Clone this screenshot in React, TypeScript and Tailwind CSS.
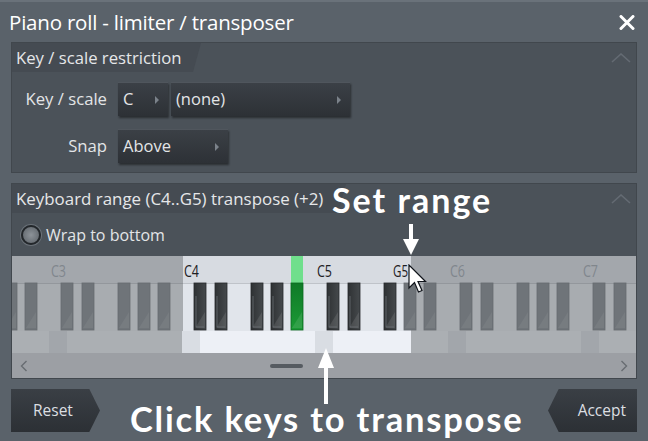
import React from 'react';

const blackOffsets = [11, 32, 68, 88, 108];
const octaves = [-95, 38, 171, 304, 437, 570];
const rangeStart = 171;
const rangeEnd = 399;
const greenKey = 279;

const labels = [
  { x: 39, t: 'C3', on: false },
  { x: 172, t: 'C4', on: true },
  { x: 305, t: 'C5', on: true },
  { x: 381, t: 'G5', on: true },
  { x: 438, t: 'C6', on: false },
  { x: 571, t: 'C7', on: false },
];

const Dropdown: React.FC<{ label: string; className: string }> = ({ label, className }) => (
  <div
    className={`h-[34px] flex items-center justify-between pl-[5px] pr-[9px] bg-linear-to-b from-[#3b4046] to-[#2d3136] border-t border-[#50565d] shadow-[1px_2px_2px_rgba(0,0,0,0.45)] text-[16.5px] text-[#e3e5e7] ${className}`}
  >
    <span>{label}</span>
    <span className="w-0 h-0 border-y-[4px] border-y-transparent border-l-[4px] border-l-[#7b828a]" />
  </div>
);

const Chevron: React.FC = () => (
  <svg width="20" height="10" viewBox="0 0 20 10" className="mr-[5px]">
    <polyline points="1,9 10,1 19,9" fill="none" stroke="#646b73" strokeWidth="1.6" />
  </svg>
);

const Keyboard: React.FC = () => {
  const keys: { x: number; on: boolean; green: boolean }[] = [];
  octaves.forEach((c) => {
    blackOffsets.forEach((o) => {
      const x = c + o;
      if (x + 12 < 0 || x > 624) return;
      keys.push({ x, on: x >= rangeStart && x + 12 <= rangeEnd, green: x === greenKey });
    });
  });
  return (
    <svg width="624" height="97" viewBox="0 0 624 97" className="block">
      <defs>
        <linearGradient id="blk" x1="0" y1="0" x2="1" y2="0">
          <stop offset="0" stopColor="#2f3234" />
          <stop offset="1" stopColor="#45494c" />
        </linearGradient>
        <linearGradient id="grn" x1="0" y1="0" x2="0" y2="1">
          <stop offset="0" stopColor="#0f7a27" />
          <stop offset="1" stopColor="#1c9a36" />
        </linearGradient>
      </defs>
      <rect x="0" y="0" width="624" height="27" fill="#a3a7ac" />
      <rect x="0" y="27" width="624" height="70" fill="#a8acb0" />
      <rect x="0" y="75" width="624" height="22" fill="#abafb3" />
      <rect x={rangeStart} y="0" width={rangeEnd - rangeStart} height="27" fill="#d7dbe1" />
      <rect x={rangeStart} y="27" width={rangeEnd - rangeStart} height="70" fill="#e1e5eb" />
      <rect x={rangeStart} y="75" width={rangeEnd - rangeStart} height="22" fill="#edf0f6" />
      {octaves.map((c) => (
        <rect
          key={c}
          x={c - 1}
          y="75"
          width="18"
          height="22"
          fill={c >= rangeStart && c < rangeEnd ? '#d9dde3' : '#a2a6ab'}
        />
      ))}
      <line x1="0" y1="27.5" x2="624" y2="27.5" stroke="#93979c" />
      <line x1={rangeStart} y1="27.5" x2={rangeEnd} y2="27.5" stroke="#bfc3c9" />
      <rect x={greenKey} y="0" width="12" height="27" fill="#70df8c" />
      {labels.map((l) => (
        <text
          key={l.t}
          x={l.x}
          y="21"
          fontSize="16"
          fontFamily="'Open Sans', sans-serif"
          textLength="15"
          lengthAdjust="spacingAndGlyphs"
          fill={l.on ? '#1d2023' : '#80868c'}
        >
          {l.t}
        </text>
      ))}
      {keys.map((k) => (
        <g key={k.x}>
          <rect
            x={k.x}
            y="27"
            width="12"
            height="47"
            fill={k.green ? 'url(#grn)' : k.on ? 'url(#blk)' : '#6f7479'}
            stroke={k.green ? '#0b6a20' : k.on ? '#26292b' : '#666b70'}
            strokeWidth="0.8"
          />
          <polygon
            points={`${k.x + 1},${72} ${k.x + 11},${56} ${k.x + 11},${72}`}
            fill="#ffffff"
            opacity={k.on || k.green ? 0.1 : 0.06}
          />
          {k.on && !k.green && (
            <polyline
              points={`${k.x + 2},${40} ${k.x + 2},${71} ${k.x + 10},${71}`}
              fill="none"
              stroke="#6b7073"
              strokeWidth="0.8"
            />
          )}
        </g>
      ))}
    </svg>
  );
};

const App: React.FC = () => {
  return (
    <div className="relative w-[648px] h-[441px] overflow-hidden bg-[#5a626a] border-t-2 border-[#6a727a] font-['Open_Sans',sans-serif] flex flex-col">
      {/* title bar */}
      <div className="h-[40px] flex items-center justify-between pl-[9px] pr-[13px]">
        <span className="text-[20.5px] text-white tracking-[-0.2px]">Piano roll - limiter / transposer</span>
        <svg width="16" height="15" viewBox="0 0 16 15">
          <path d="M2 1.5 L14 13.5 M14 1.5 L2 13.5" stroke="#ffffff" strokeWidth="3" strokeLinecap="round" />
        </svg>
      </div>

      {/* key / scale panel */}
      <div className="mx-[11px] h-[131px] bg-[#4b5259] border border-[#41474d] flex flex-col">
        <div className="h-[29px] flex items-center justify-between">
          <div className="h-full w-[189px] bg-[#454b52] [clip-path:polygon(0_0,100%_0,calc(100%-8px)_100%,0_100%)] flex items-center pl-[4px] text-[16.7px] text-[#e5e7e9]">
            Key / scale restriction
          </div>
          <Chevron />
        </div>
        <div className="flex items-center mt-[10px]">
          <span className="w-[95px] text-right text-[16.7px] text-[#e3e5e7]">Key / scale</span>
          <div className="flex gap-[3px] ml-[11px]">
            <Dropdown label="C" className="w-[50px]" />
            <Dropdown label="(none)" className="w-[179px]" />
          </div>
        </div>
        <div className="flex items-center mt-[13px]">
          <span className="w-[95px] text-right text-[16.7px] text-[#e3e5e7]">Snap</span>
          <Dropdown label="Above" className="w-[110px] ml-[11px]" />
        </div>
      </div>

      {/* keyboard panel */}
      <div className="mx-[11px] mt-[10px] h-[196px] bg-[#4b5259] border border-[#41474d] flex flex-col">
        <div className="h-[29px] flex items-center justify-between">
          <div className="h-full w-[334px] bg-[#454b52] [clip-path:polygon(0_0,100%_0,calc(100%-8px)_100%,0_100%)] flex items-center pl-[4px] text-[16.9px] text-[#e5e7e9]">
            Keyboard range (C4..G5) transpose (+2)
          </div>
          <Chevron />
        </div>
        <div className="h-[43px] flex items-center pl-[9px] gap-[5px]">
          <span className="w-[20px] h-[20px] rounded-full border-2 border-[#23272b] bg-radial from-[#8d9399] to-[#5c6268] shadow-[0_0_0_1px_#6a7178]" />
          <span className="text-[16px] text-[#e3e5e7]">Wrap to bottom</span>
        </div>
        <Keyboard />
        <div className="h-[25px] bg-[#9c9fa4] flex items-center px-[8px]">
          <svg width="8" height="12" viewBox="0 0 8 12">
            <polyline points="6.5,1 1.5,6 6.5,11" fill="none" stroke="#686d72" strokeWidth="1.4" />
          </svg>
          <span className="ml-[242px] w-[33px] h-[4px] rounded-full bg-[#565b61]" />
          <span className="flex-1" />
          <svg width="8" height="12" viewBox="0 0 8 12">
            <polyline points="1.5,1 6.5,6 1.5,11" fill="none" stroke="#686d72" strokeWidth="1.4" />
          </svg>
        </div>
      </div>

      {/* buttons */}
      <div className="flex justify-between px-[11px] mt-[10px]">
        <div className="w-[89px] h-[43px] bg-linear-to-b from-[#3a3f45] to-[#2c3035] [clip-path:polygon(0_0,88%_0,100%_50%,88%_100%,0_100%)] flex items-center pl-[22px] text-[15.5px] text-[#dcdfe2]">
          Reset
        </div>
        <div className="w-[89px] h-[43px] bg-linear-to-b from-[#3a3f45] to-[#2c3035] [clip-path:polygon(12%_0,100%_0,100%_100%,12%_100%,0_50%)] flex items-center justify-end pr-[11px] text-[15.5px] text-[#dcdfe2]">
          Accept
        </div>
      </div>

      {/* annotations */}
      <span className="absolute left-[332px] top-[181px] text-[34px] font-bold text-white tracking-[2px] leading-none font-['Lato',sans-serif]">
        Set range
      </span>
      <svg className="absolute left-[402px] top-[222px]" width="18" height="31" viewBox="0 0 18 31">
        <rect x="7" y="0" width="4" height="18" fill="#ffffff" />
        <polygon points="1,15 17,15 9,31" fill="#ffffff" />
      </svg>
      <svg className="absolute left-[408px] top-[262px]" width="20" height="30" viewBox="0 0 20 30">
        <path d="M1 1 L1 24 L6.5 18.5 L10.5 28 L14 26.5 L10 17.5 L17.5 17.5 Z" fill="#ffffff" stroke="#10141a" strokeWidth="1.2" />
      </svg>
      <svg className="absolute left-[317px] top-[346px]" width="18" height="56" viewBox="0 0 18 56">
        <polygon points="9,0 17,20 1,20" fill="#ffffff" />
        <rect x="7" y="17" width="4" height="39" fill="#ffffff" />
      </svg>
      <span className="absolute left-[130px] top-[400px] text-[34.5px] font-bold text-white tracking-[1.8px] leading-none font-['Lato',sans-serif]">
        Click keys to transpose
      </span>
    </div>
  );
};

export default App;
